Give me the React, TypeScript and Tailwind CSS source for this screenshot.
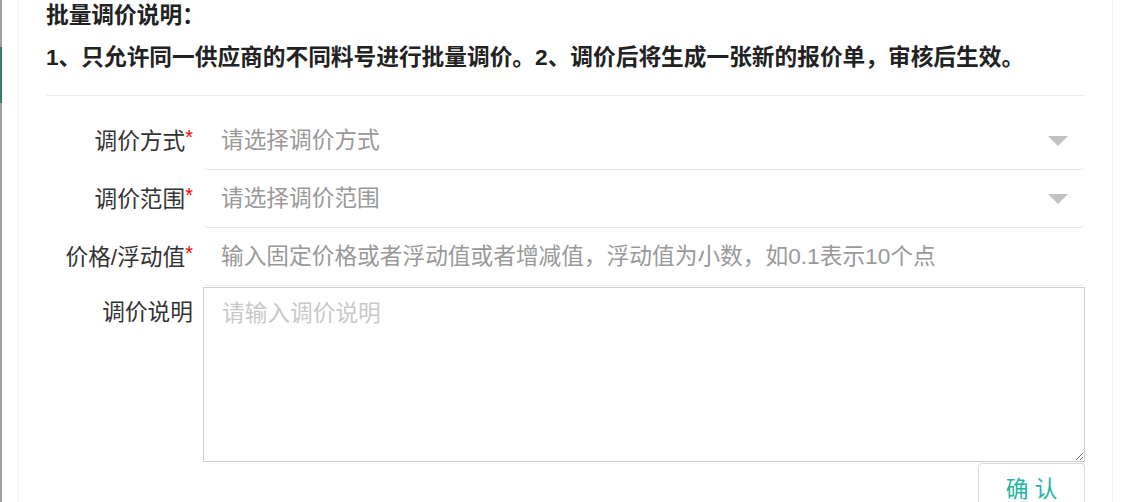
import React from 'react';

const font = { fontFamily: '"Liberation Sans", "Noto Sans CJK SC", sans-serif' };

const SelectRow: React.FC<{ label: string; placeholder: string }> = ({ label, placeholder }) => (
  <div className="flex items-stretch h-[58px]">
    <div className="w-[157px] shrink-0 flex items-center justify-end pr-[10px] text-[22.7px] text-[#333]">
      {label}
      <span className="text-[#f00] self-start mt-[15px] text-[20px] leading-none">*</span>
    </div>
    <div className="flex-1 flex items-center justify-between pl-[18px] pr-[17px] border-b border-[#e6e6e6] rounded-[5px] text-[22.7px] text-[#999]">
      <span>{placeholder}</span>
      <svg width="20" height="10" viewBox="0 0 20 10">
        <path d="M0 0 L20 0 L10 10 Z" fill="#c2c2c2" />
      </svg>
    </div>
  </div>
);

const App: React.FC = () => {
  return (
    <div className="flex h-[502px] bg-white overflow-hidden" style={font}>
      <div className="w-[2px] shrink-0 bg-[#a0a0a0] flex flex-col">
        <div className="h-[47px]" />
        <div className="h-[56px] bg-[#3a7a70]" />
      </div>
      <div className="w-[16px] shrink-0" />
      <div className="w-[1095px] shrink-0 border-x border-[#f3f3f3] px-[27px]">
        <div className="text-[22.7px] font-bold text-[#222] leading-[30px]">批量调价说明：</div>
        <div className="text-[22.7px] font-bold text-[#222] leading-[30px] mt-[12px]">
          1、只允许同一供应商的不同料号进行批量调价。2、调价后将生成一张新的报价单，审核后生效。
        </div>
        <div className="mt-[23px] border-t border-[#ececec]" />
        <div className="mt-[16px]">
          <SelectRow label="调价方式" placeholder="请选择调价方式" />
          <SelectRow label="调价范围" placeholder="请选择调价范围" />
          <div className="flex items-stretch h-[58px]">
            <div className="w-[157px] shrink-0 flex items-center justify-end pr-[10px] text-[22.7px] text-[#333]">
              价格/浮动值
              <span className="text-[#f00] self-start mt-[15px] text-[20px] leading-none">*</span>
            </div>
            <input
              className="flex-1 pl-[18px] border-b border-[#e6e6e6] rounded-[5px] text-[22.7px] outline-none placeholder:text-[#999]"
              placeholder="输入固定价格或者浮动值或者增减值，浮动值为小数，如0.1表示10个点"
            />
          </div>
          <div className="flex mt-[1px]">
            <div className="w-[157px] shrink-0 flex justify-end pr-[10px] pt-[10px] text-[22.7px] text-[#333] leading-[30px]">
              调价说明
            </div>
            <textarea
              className="flex-1 h-[175px] border border-[#cfcfcf] pl-[18px] pt-[10px] text-[22.7px] leading-[30px] outline-none placeholder:text-[#c8c8c8] resize"
              placeholder="请输入调价说明"
            />
          </div>
          <div className="flex justify-end mt-[1px]">
            <button className="w-[107px] h-[50px] border border-[#dcdcdc] rounded-[4px] text-[22.7px] text-[#1fb5a3] bg-white pt-[2px]">
              确 认
            </button>
          </div>
        </div>
      </div>
    </div>
  );
};

export default App;
